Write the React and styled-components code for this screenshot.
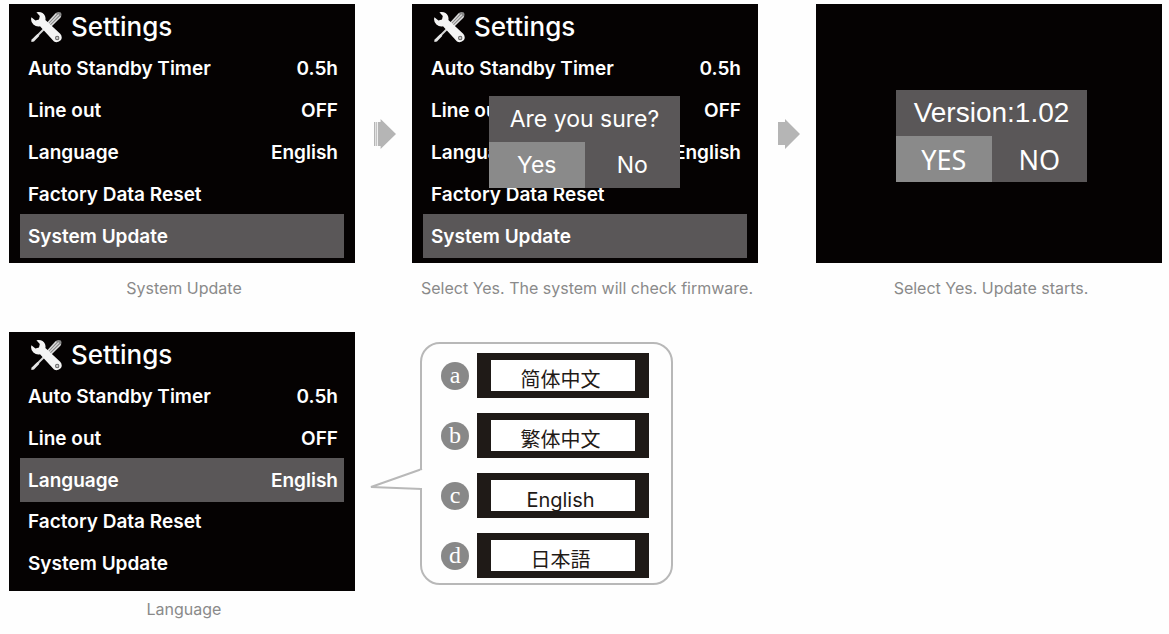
import React from "react";
import styled, { createGlobalStyle, css } from "styled-components";

const GlobalStyle = createGlobalStyle`
  *, *::before, *::after {
    box-sizing: border-box;
  }
  body {
    margin: 0;
    background: #fefefe;
    font-family: Inter, "Noto Sans CJK SC", sans-serif;
  }
`;

const Page = styled.main`
  display: grid;
  grid-template-columns: minmax(0, 1fr) 57px minmax(0, 1fr) 58px minmax(0, 1fr);
  row-gap: 32px;
  padding: 4px 7px 12px 9px;
`;

const Figure = styled.figure`
  display: flex;
  flex-direction: column;
  margin: 0;
`;

const Caption = styled.figcaption`
  margin-top: ${props => (props.$tight ? "6px" : "13px")};
  padding-left: 4px;
  color: #8a8a8a;
  font-size: 16px;
  line-height: 24px;
  text-align: center;
  white-space: nowrap;
`;

const Screen = styled.div`
  position: relative;
  flex: 1;
  background: #050202;
  color: #fff;
  ${props =>
    props.$centered &&
    css`
      display: grid;
      place-items: center;
      padding: 5px 0 0 5px;
    `}
`;

const ScreenTitle = styled.h2`
  display: flex;
  align-items: center;
  gap: 9px;
  height: 43px;
  margin: 0;
  padding: 2px 0 0 21px;
  font-size: 26px;
  font-weight: 500;
`;

const Menu = styled.ul`
  margin: 0;
  padding: 0 11px 7px;
  list-style: none;
`;

const MenuItem = styled.li`
  height: 42px;
`;

const MenuButton = styled.button`
  display: flex;
  align-items: center;
  justify-content: space-between;
  width: 100%;
  height: 42px;
  padding: 0 6px 0 8px;
  border: 0;
  background: none;
  color: #fff;
  font: 600 19px Inter, sans-serif;
  cursor: pointer;
  ${props =>
    props.$active &&
    css`
      height: 44px;
      margin: -1px 0;
      background: #5a5758;
    `}
`;

const DialogBox = styled.div`
  display: grid;
  grid-template-columns: 1fr 1fr;
  width: 191px;
  background: #5a5758;
  color: #fff;
  font: 400 23px Inter, sans-serif;
`;

const Overlay = styled.div`
  position: absolute;
  top: 92px;
  left: calc(50% - 96px);
`;

const DialogText = styled.p`
  grid-column: 1 / -1;
  margin: 0;
  line-height: 46px;
  text-align: center;
  ${props =>
    props.$version &&
    css`
      font: 400 28px/46px "Liberation Sans", Arial, sans-serif;
    `}
`;

const DialogButton = styled.button`
  height: 46px;
  padding: 0;
  border: 0;
  background: ${props => (props.$active ? "#8a8a8a" : "#5a5758")};
  color: #fff;
  font: inherit;
  cursor: pointer;
  ${props =>
    props.$caps &&
    css`
      font: 400 27px "Noto Sans", sans-serif;
    `}
`;

const ArrowCell = styled.div`
  display: flex;
  align-items: center;
  justify-content: flex-end;
  height: 259px;
  padding-right: 16px;
`;

const Bubble = styled.ol`
  position: relative;
  grid-column: 3;
  display: flex;
  flex-direction: column;
  gap: 15px;
  align-self: start;
  width: fit-content;
  margin: 10px 0 0 8px;
  padding: 9px 22px 5px 19px;
  border: 2px solid #b8b8b8;
  border-radius: 20px;
  list-style: none;
`;

const BubbleTail = styled.svg`
  position: absolute;
  top: 123px;
  left: -53px;
`;

const Option = styled.li`
  display: flex;
  align-items: center;
  gap: 8px;
`;

const OptionLetter = styled.span`
  width: 28px;
  height: 28px;
  border-radius: 50%;
  background: #888;
  color: #fff;
  font: 400 24px/26px "Liberation Serif", "Times New Roman", serif;
  text-align: center;
`;

const OptionButton = styled.button`
  width: 172px;
  height: 45px;
  padding: 8px 5px 0 0;
  border: 7px solid #1f1a17;
  border-width: 7px 14px;
  background: #fff;
  color: #1f1a17;
  font: 400 20px Inter, "Noto Sans CJK SC", "Noto Sans CJK JP", sans-serif;
  line-height: 20px;
  cursor: pointer;
`;

function ToolsIcon() {
  return (
    <svg width="32" height="32" viewBox="0 0 32 32" aria-hidden="true">
      <path d="M14 18 L5 27" stroke="#d8d8d8" strokeWidth="2" />
      <path d="M7.5 23 L9.4 24.8 L4 30.4 L1.4 31 L1.4 28.8 Z" fill="#e6e6e6" />
      <path
        d="M16 12.5 L25.4 2.2 Q28.6 0.2 30.8 1.6 Q32.4 3.8 30.4 7 L20.5 16.5 Z"
        fill="#8a8a8a"
      />
      <path
        d="M17.4 12.4 L26.4 2.6 M19 13.6 L28.8 3.6 M20.8 15 L30.6 5.4"
        stroke="#e4e4e4"
        strokeWidth="1.1"
      />
      <path
        d="M6.4 1.2 Q12.8 0 15 5 Q15.8 7.4 15.4 9 L30.2 22.8 Q32.8 26 31 29 Q28 32.2 24 30.6 L10 15.2 Q6.4 16 3.4 13.4 Q0.2 10.6 1.4 6.2 L5.4 9.6 L9 8.6 L9.8 5 Z"
        fill="#f4f4f4"
      />
      <circle cx="27.2" cy="27" r="2.2" fill="#666" />
      <circle cx="27.2" cy="27" r="1.2" fill="#ccc" />
    </svg>
  );
}

function Arrow({ striped }) {
  return (
    <ArrowCell>
      <svg width="22" height="30" viewBox="0 0 22 30" aria-hidden="true">
        {striped ? (
          <g fill="#b5b5b5">
            <path d="M0 3 H1.4 V27 H0 Z M2.2 3 H3.2 V27 H2.2 Z" />
            <path d="M4 3 H6.6 V0 L22 15 L6.6 30 V27 H4 Z" />
          </g>
        ) : (
          <path d="M0 3 H7 V0 L22 15 L7 30 V26 H0 Z" fill="#b5b5b5" />
        )}
      </svg>
    </ArrowCell>
  );
}

const settings = [
  { name: "Auto Standby Timer", value: "0.5h" },
  { name: "Line out", value: "OFF" },
  { name: "Language", value: "English" },
  { name: "Factory Data Reset" },
  { name: "System Update" }
];

const languages = [
  { letter: "a", label: "简体中文", lang: "zh-Hans" },
  { letter: "b", label: "繁体中文", lang: "zh-Hans" },
  { letter: "c", label: "English", lang: "en" },
  { letter: "d", label: "日本語", lang: "ja" }
];

function SettingsScreen({ active, children }) {
  return (
    <Screen>
      <ScreenTitle>
        <ToolsIcon />
        Settings
      </ScreenTitle>
      <Menu>
        {settings.map(({ name, value }) => (
          <MenuItem key={name}>
            <MenuButton type="button" $active={name === active}>
              <span>{name}</span>
              {value && <span>{value}</span>}
            </MenuButton>
          </MenuItem>
        ))}
      </Menu>
      {children}
    </Screen>
  );
}

export default function App() {
  return (
    <>
      <GlobalStyle />
      <Page>
        <Figure>
          <SettingsScreen active="System Update" />
          <Caption>System Update</Caption>
        </Figure>
        <Arrow striped />
        <Figure>
          <SettingsScreen active="System Update">
            <Overlay>
              <DialogBox role="dialog" aria-label="Confirm update">
                <DialogText>Are you sure?</DialogText>
                <DialogButton type="button" $active>
                  Yes
                </DialogButton>
                <DialogButton type="button">No</DialogButton>
              </DialogBox>
            </Overlay>
          </SettingsScreen>
          <Caption>Select Yes. The system will check firmware.</Caption>
        </Figure>
        <Arrow />
        <Figure>
          <Screen $centered>
            <DialogBox role="dialog" aria-label="Firmware version">
              <DialogText $version>Version:1.02</DialogText>
              <DialogButton type="button" $active $caps>
                YES
              </DialogButton>
              <DialogButton type="button" $caps>
                NO
              </DialogButton>
            </DialogBox>
          </Screen>
          <Caption>Select Yes. Update starts.</Caption>
        </Figure>

        <Figure>
          <SettingsScreen active="Language" />
          <Caption $tight>Language</Caption>
        </Figure>
        <Bubble>
          <BubbleTail width="54" height="24" viewBox="0 0 54 24" aria-hidden="true">
            <path
              d="M53 2 L2 20 L53 22"
              fill="#fefefe"
              stroke="#b8b8b8"
              strokeWidth="2"
            />
            <path d="M51 3.6 H54 V21 H51 Z" fill="#fefefe" />
          </BubbleTail>
          {languages.map(({ letter, label, lang }) => (
            <Option key={letter}>
              <OptionLetter>{letter}</OptionLetter>
              <OptionButton type="button" lang={lang}>
                {label}
              </OptionButton>
            </Option>
          ))}
        </Bubble>
      </Page>
    </>
  );
}
